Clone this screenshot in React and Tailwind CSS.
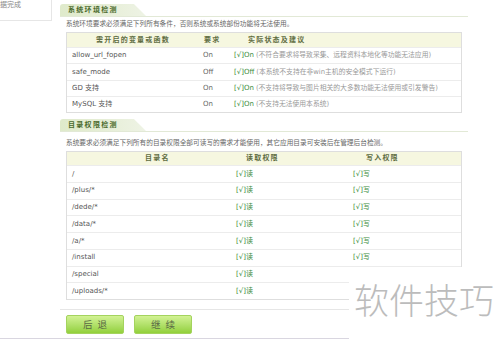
import React from "react";

const envRows = [
  { name: "allow_url_fopen", need: "On", state: "On", note: "(不符合要求将导致采集、远程资料本地化等功能无法应用)" },
  { name: "safe_mode", need: "Off", state: "Off", note: "(本系统不支持在非win主机的安全模式下运行)" },
  { name: "GD 支持", need: "On", state: "On", note: "(不支持将导致与图片相关的大多数功能无法使用或引发警告)" },
  { name: "MySQL 支持", need: "On", state: "On", note: "(不支持无法使用本系统)" },
];

const dirRows = [
  { dir: "/", read: true, write: true },
  { dir: "/plus/*", read: true, write: true },
  { dir: "/dede/*", read: true, write: true },
  { dir: "/data/*", read: true, write: true },
  { dir: "/a/*", read: true, write: true },
  { dir: "/install", read: true, write: true },
  { dir: "/special", read: true, write: false },
  { dir: "/uploads/*", read: true, write: false },
];

function SectionTab({ title }) {
  return (
    <div className="flex items-end border-b border-[#e2e9d6] h-[13px]">
      <div className="w-[86px] h-[12px] rounded-tl-[3px] bg-gradient-to-r from-[#dfeacb] via-[#e6eed6] to-[#eef3e5] [clip-path:polygon(0_0,86%_0,100%_100%,0_100%)] flex items-center pl-[8px]">
        <span className="text-[7px] font-bold tracking-[1.3px] text-[#4a6a2c] leading-none">{title}</span>
      </div>
    </div>
  );
}

function Check({ children }) {
  return <span className="text-[#3c8c3c]">[√]{children}</span>;
}

export default function App() {
  return (
    <div
      className="relative w-[500px] h-[341px] bg-white overflow-hidden text-[#666]"
      style={{ fontFamily: '"DejaVu Sans", "Noto Sans CJK SC", sans-serif' }}
    >
      <div className="flex h-[338px]">
        {/* sidebar */}
        <div className="w-[52px] shrink-0">
          <div className="h-[21px] border-r border-b border-[#e6e6e6] overflow-hidden">
            <div className="mt-[1px] text-[7px] leading-[8px] text-[#888] whitespace-nowrap">据完成</div>
          </div>
        </div>

        {/* main */}
        <div className="ml-[8px] w-[408px] pt-[4px]">
          <SectionTab title="系统环境检测" />
          <div className="mt-[2px] px-[6px] h-[10px] text-[6.7px] leading-[10px] whitespace-nowrap">
            系统环境要求必须满足下列所有条件，否则系统或系统部份功能将无法使用。
          </div>

          <div className="mt-[3px] mx-[6px] border border-[#dedede]">
            <div className="flex h-[14px] items-center bg-[#f6f7e0] text-[7px] font-bold tracking-[1.2px] text-[#5f6d42]">
              <div className="w-[132px] text-center">需开启的变量或函数</div>
              <div className="w-[31px] pl-[5px]">要求</div>
              <div className="flex-1 pl-[18px]">实际状态及建议</div>
            </div>
            {envRows.map((r) => (
              <div key={r.name} className="flex h-[16.25px] items-center border-t border-[#ececec] text-[7px] whitespace-nowrap">
                <div className="w-[132px] pl-[5px] text-[#555]">{r.name}</div>
                <div className="w-[31px] pl-[4px] text-[#666]">{r.need}</div>
                <div className="flex-1 pl-[4px]">
                  <Check>{r.state}</Check>
                  <span className="ml-[2px] text-[#999] text-[6.8px]">{r.note}</span>
                </div>
              </div>
            ))}
          </div>

          <div className="mt-[6px]">
            <SectionTab title="目录权限检测" />
          </div>
          <div className="mt-[6px] px-[6px] h-[10px] text-[6.7px] leading-[10px] whitespace-nowrap">
            系统要求必须满足下列所有的目录权限全部可读写的需求才能使用，其它应用目录可安装后在管理后台检测。
          </div>

          <div className="mt-[3px] mx-[6px] border border-[#dedede]">
            <div className="flex h-[13px] items-center bg-[#f6f7e0] text-[7px] font-bold tracking-[1.2px] text-[#5f6d42]">
              <div className="w-[165px] pl-[78px]">目录名</div>
              <div className="w-[117px] pl-[14px]">读取权限</div>
              <div className="flex-1 pl-[17px]">写入权限</div>
            </div>
            {dirRows.map((r) => (
              <div key={r.dir} className="flex h-[16.75px] items-center border-t border-[#ececec] text-[7px] whitespace-nowrap">
                <div className="w-[165px] pl-[5px] text-[#555]">{r.dir}</div>
                <div className="w-[117px] pl-[4px]">{r.read && <Check>读</Check>}</div>
                <div className="flex-1 pl-[4px]">{r.write && <Check>写</Check>}</div>
              </div>
            ))}
          </div>

          <div className="mt-[9px] border-t border-[#e6e6e6]" />
          <div className="mt-[5px] ml-[6px] flex gap-[10px]">
            <button className="w-[58px] h-[19px] rounded-[2px] border border-[#a4d35e] bg-gradient-to-b from-[#d2f293] to-[#92d03a] text-[9.5px] tracking-[5px] text-[#5a6a45] leading-none pl-[5px]">
              后退
            </button>
            <button className="w-[58px] h-[19px] rounded-[2px] border border-[#a4d35e] bg-gradient-to-b from-[#d2f293] to-[#92d03a] text-[9.5px] tracking-[5px] text-[#5a6a45] leading-none pl-[5px]">
              继续
            </button>
          </div>
        </div>
      </div>
      <div className="border-t border-[#d9d6e0]" />

      {/* watermark overlay */}
      <div className="absolute left-[349px] top-[267px] right-0 bottom-0 bg-white pl-[5px] pt-[14px]">
        <div className="text-[35px] font-light leading-none text-[#bcbcbc] whitespace-nowrap" style={{ fontFamily: '"Noto Sans CJK SC", sans-serif' }}>
          软件技巧
        </div>
      </div>
    </div>
  );
}
